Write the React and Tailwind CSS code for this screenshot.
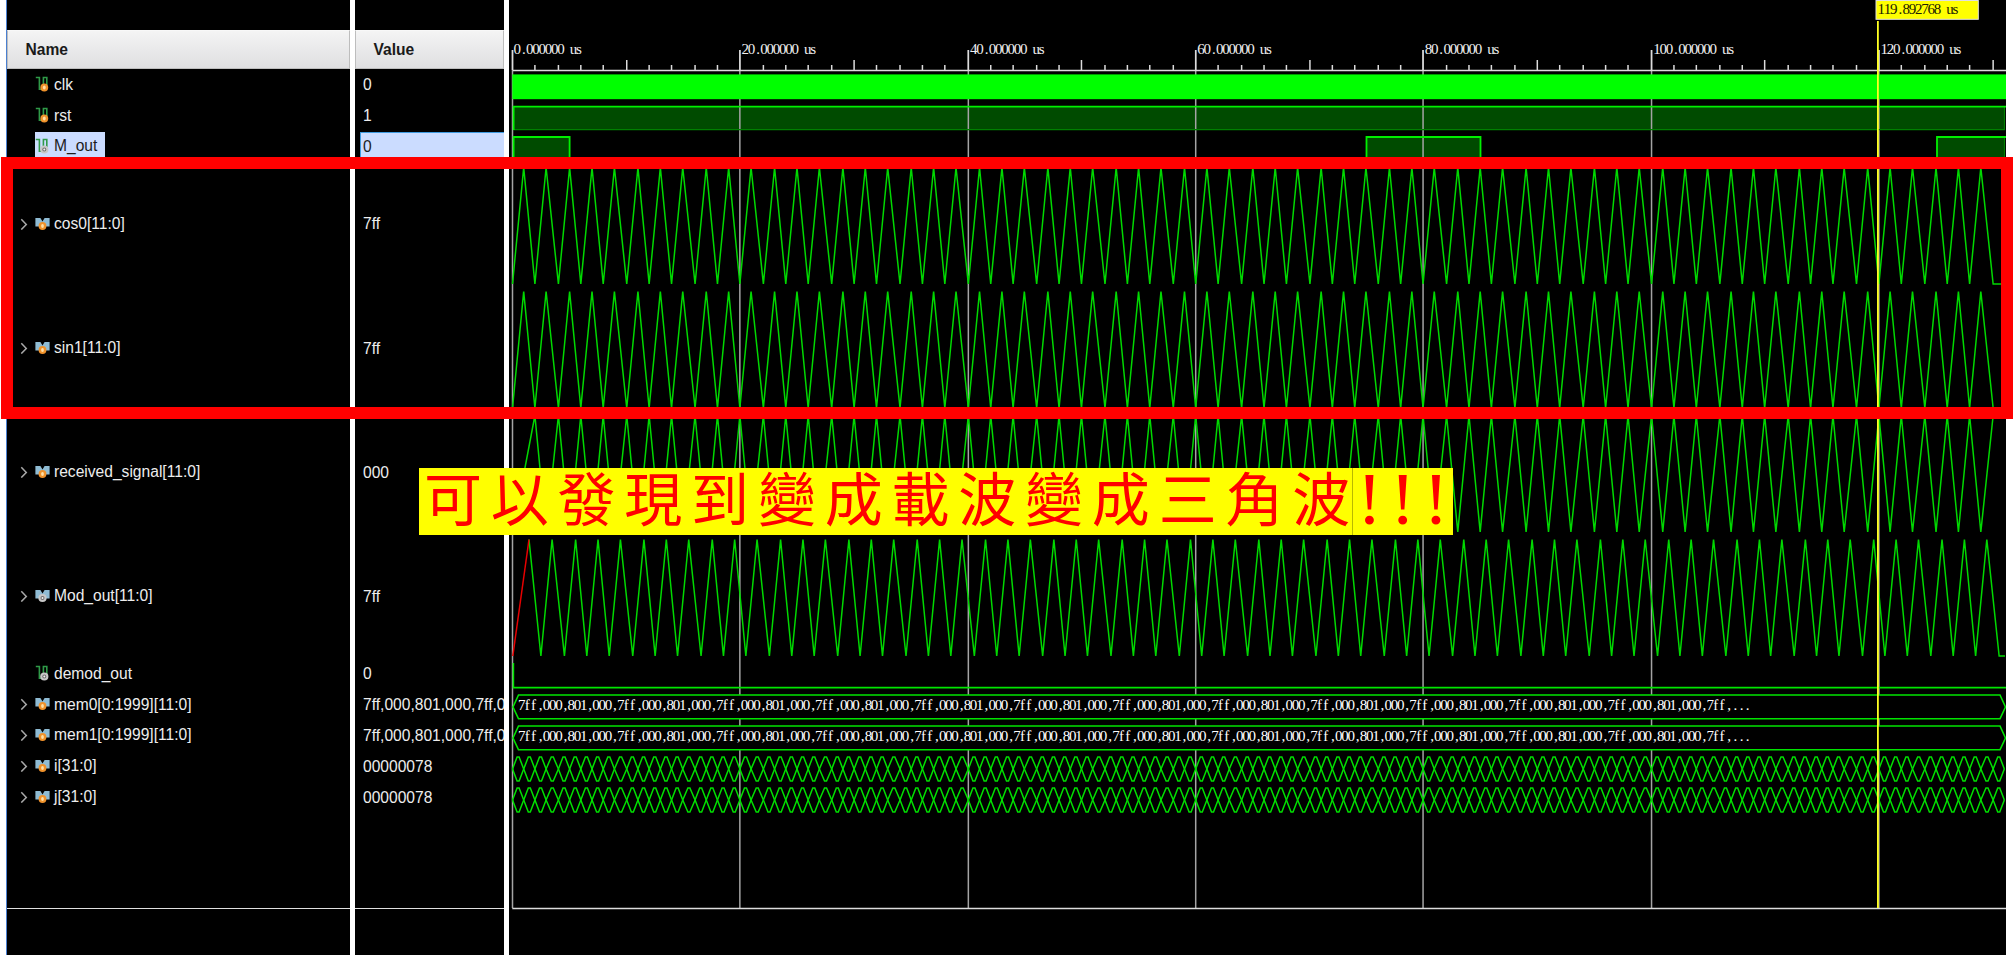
import React from "react";

const X0 = 512.8 - 509;
const UNIT = 11.386;
const SNAP = 1.12;
const tx = (t) => X0 - 0.3 + Math.round((t * UNIT) / SNAP) * SNAP;

const ROWS = [
  { name: "clk", value: "0", kind: "bit", tone: "orange" },
  { name: "rst", value: "1", kind: "bit", tone: "orange" },
  { name: "M_out", value: "0", kind: "bit", tone: "gray", selected: true },
  { name: "cos0[11:0]", value: "7ff", kind: "bus", tone: "orange", tall: true },
  { name: "sin1[11:0]", value: "7ff", kind: "bus", tone: "orange", tall: true },
  { name: "received_signal[11:0]", value: "000", kind: "bus", tone: "orange", tall: true },
  { name: "Mod_out[11:0]", value: "7ff", kind: "bus", tone: "gray", tall: true },
  { name: "demod_out", value: "0", kind: "bit", tone: "gray" },
  { name: "mem0[0:1999][11:0]", value: "7ff,000,801,000,7ff,00", kind: "bus", tone: "orange" },
  { name: "mem1[0:1999][11:0]", value: "7ff,000,801,000,7ff,00", kind: "bus", tone: "orange" },
  { name: "i[31:0]", value: "00000078", kind: "bus", tone: "orange" },
  { name: "j[31:0]", value: "00000078", kind: "bus", tone: "orange" },
];

function Badge({ cx, cy, tone }) {
  return tone === "orange" ? (
    <g>
      <ellipse cx={cx} cy={cy} rx="3.9" ry="4" fill="#f0922b" />
      <ellipse cx={cx} cy={cy} rx="1.4" ry="1.9" fill="#ffe0a8" />
    </g>
  ) : (
    <g>
      <circle cx={cx} cy={cy} r="4.1" fill="#c8c8c8" />
      <circle cx={cx} cy={cy} r="2" fill="#6f6f6f" />
      <circle cx={cx} cy={cy} r="1" fill="#f2f2f2" />
    </g>
  );
}

function SignalIcon({ kind, tone }) {
  return (
    <svg className="block shrink-0" width="15" height="16" viewBox="0 0 15 16">
      {kind === "bit" ? (
        <path d="M0.8 1.5H4.4V13.2H8.4V1.5H11.8V9" fill="none" stroke="#2f9a48" strokeWidth="1.6" />
      ) : (
        <path d="M0.4 2H5.4L7.5 5.5L9.6 2H14.6V10.5H11L7.5 13L4 10.5H0.4Z" fill="#8fbcd4" />
      )}
      <Badge cx={kind === "bit" ? 9.3 : 7.5} cy={kind === "bit" ? 11.5 : 10} tone={tone} />
    </svg>
  );
}

function Chevron({ hidden }) {
  return (
    <svg className={hidden ? "block shrink-0 invisible" : "block shrink-0"} width="8" height="12" viewBox="0 0 8 12">
      <path d="M1.3 1.2L6.3 6.4L1.3 11.6" fill="none" stroke="#a8a8a8" strokeWidth="1.5" />
    </svg>
  );
}

function NameColumn() {
  return (
    <div className="flex w-[343px] shrink-0 flex-col">
      <Header label="Name" />
      <div className="flex h-[840px] flex-col border-b border-[#e0e0e0]">
        {ROWS.map((r) => (
          <div
            key={r.name}
            className={(r.tall ? "h-[124.1px]" : "h-[30.9px]") + " flex shrink-0 items-center pl-[12.5px]"}
          >
            <Chevron hidden={r.kind === "bit"} />
            <div
              className={
                (r.selected ? "bg-[#cbdcff] text-[#1c1c1c]" : "text-[#ededed]") +
                " ml-[7px] flex h-[29px] items-center gap-[4.5px] pr-[8px]"
              }
            >
              <SignalIcon kind={r.kind} tone={r.tone} />
              <span className="whitespace-nowrap text-[15.6px] leading-none">{r.name}</span>
            </div>
          </div>
        ))}
      </div>
    </div>
  );
}

function ValueColumn() {
  return (
    <div className="flex w-[148.5px] shrink-0 flex-col overflow-hidden">
      <Header label="Value" />
      <div className="flex h-[840px] flex-col border-b border-[#e0e0e0]">
        {ROWS.map((r) => (
          <div
            key={r.name}
            className={(r.tall ? "h-[124.1px]" : "h-[30.9px]") + " flex shrink-0 items-center pl-[5px]"}
          >
            <div
              className={
                (r.selected
                  ? "border-l border-t border-[#3f9be0] bg-[#cbdcff] text-[#1c1c1c]"
                  : "border-l border-t border-transparent text-[#ededed]") +
                " flex h-[29px] w-full items-center overflow-hidden pl-[2px]"
              }
            >
              <span className="whitespace-nowrap text-[15.6px] leading-none">{r.value}</span>
            </div>
          </div>
        ))}
      </div>
    </div>
  );
}

function Header({ label }) {
  return (
    <div className="mt-[30px] flex h-[39px] shrink-0 items-center border border-[#bdbdbd] border-t-[#f8f8f8] bg-linear-to-b from-[#f4f4f4] to-[#dfdfe1] pl-[17.5px] text-[15.6px] font-bold text-[#1a1a1a]">
      {label}
    </div>
  );
}

function Cells({ x, y, step, size, fill, children }) {
  const nudge = (c) => (c === "," || c === "." ? 2.2 : c === "f" ? 0.6 : 0);
  const xs = Array.from(children, (c, i) => (x + i * step + nudge(c)).toFixed(2)).join(" ");
  return (
    <text x={xs} y={y} fontFamily="'Liberation Serif', serif" fontSize={size} fill={fill}>
      {children}
    </text>
  );
}

function zigzag(first, count, offset, startHigh, top, bottom) {
  const pts = [];
  for (let i = 0; i < count; i++) {
    const high = startHigh ? i % 2 === 0 : i % 2 === 1;
    pts.push(`${(tx(first + i) + offset).toFixed(2)},${high ? top : bottom}`);
  }
  return pts.join(" ");
}

function lens(top) {
  const mid = top + 12;
  const bottom = top + 24;
  const a = [];
  const b = [];
  for (let k = 0; k < 131; k++) {
    const l = tx(k);
    const c = (tx(k) + tx(k + 1)) / 2;
    a.push(`${l},${mid} ${c - 1},${k % 2 ? bottom : top} ${c + 1},${k % 2 ? bottom : top}`);
    b.push(`${l},${mid} ${c - 1},${k % 2 ? top : bottom} ${c + 1},${k % 2 ? top : bottom}`);
  }
  const end = `${tx(131)},${mid}`;
  return [a.join(" ") + " " + end, b.join(" ") + " " + end];
}

const MEM_TEXT = "7ff,000,801,000,".repeat(12) + "7ff,...";
const TICKS = Array.from({ length: 66 }, (_, i) => i * 2);
const MAJORS = [0, 20, 40, 60, 80, 100, 120];

function Waves() {
  return (
    <svg className="block shrink-0" width="1497" height="955" viewBox="0 0 1497 955">
      <g fill="#004b00">
        <rect x={X0} y="106" width="1492" height="24" />
        <rect x={X0} y="137" width="57" height="24" />
        <rect x="857.5" y="137" width="114" height="24" />
        <rect x="1428" y="137" width="68" height="24" />
      </g>
      <g stroke="#a4a4a4" strokeWidth="1.5">
        {MAJORS.map((t) => (
          <line key={t} x1={tx(t)} x2={tx(t)} y1="50" y2="908" />
        ))}
      </g>
      <g stroke="#dcdcdc" strokeWidth="1.5">
        {TICKS.map((t) => (
          <line key={t} x1={tx(t)} x2={tx(t)} y1={t % 20 === 0 ? 50 : t % 10 === 0 ? 60 : 65} y2="70" />
        ))}
        <line x1={X0} x2="1497" y1="70.5" y2="70.5" />
        <line x1={X0 - 0.5} x2="1497" y1="908.4" y2="908.4" />
      </g>
      {MAJORS.map((t) => (
        <Cells key={t} x={tx(t) + (t ? 1.6 : 1)} y={53.5} step={6.25} size={15} fill="#f0f0f0">
          {t + ".000000 us"}
        </Cells>
      ))}

      <rect x={X0 - 0.5} y="74.4" width="1493.7" height="24.8" fill="#00ff00" />

      <g fill="none">
        <path d="M1495.5 107V129.6H4" stroke="#008000" strokeWidth="1.2" />
        <g stroke="#00f000" strokeWidth="1.8">
          <path d="M4.6 130V106.6H1497" />
          <path d="M4.6 161V137H60.6V161" />
          <path d="M857.5 161V137H971.5V161" />
          <path d="M1428 161V137H1497" />
        </g>
        <path d="M1495.5 138V161" stroke="#008000" strokeWidth="1.2" />
      </g>

      <g fill="none" stroke="#00d800" strokeWidth="1.5">
        <polyline points={zigzag(0, 131, 0, false, 167.5, 284) + " 1496,284"} />
        <polyline points={zigzag(0, 131, 0, false, 291.5, 408) + " 1496,408"} />
        <polyline points={`${X0},532 ` + zigzag(2, 129, 0, true, 415.5, 532) + " 1496,415.5"} />
        <polyline points={"20,539.5 " + zigzag(2, 129, 6, false, 539.5, 656) + " 1496,656"} />
        <polyline points={`${X0},656 20,539.5`} stroke="#e80000" />
        <path d="M4.4 663V687.6H1497" stroke="#00e400" strokeWidth="1.6" />
      </g>

      {[695, 726].map((y) => (
        <g key={y}>
          <polygon
            points={`4,${y + 12} 9.5,${y} 1491,${y} 1496.5,${y + 12} 1491,${y + 23.8} 9.5,${y + 23.8}`}
            fill="#000"
            stroke="#00e400"
            strokeWidth="1.6"
          />
          <Cells x={9} y={y + 15} step={6.19} size={15} fill="#ffffff">
            {MEM_TEXT}
          </Cells>
        </g>
      ))}

      <g fill="none" stroke="#00e000" strokeWidth="1.5">
        {[757, 788].map((y) => lens(y).map((p, i) => <polyline key={y + i} points={p} />))}
      </g>

      <line x1="1368.9" x2="1368.9" y1="21" y2="908" stroke="#ffff20" strokeWidth="1.8" />
      <rect x="1367" y="0.5" width="102.3" height="18.8" fill="#ffff00" stroke="#e0e0e0" />
      <Cells x={1368.6} y={14} step={6.25} size={15} fill="#202000">
        119.892768 us
      </Cells>
    </svg>
  );
}

export default function App() {
  return (
    <div className="relative flex h-[955px] w-[2013px] overflow-hidden bg-white font-['Liberation_Sans',Arial,sans-serif]">
      <div className="ml-[6px] flex bg-black">
        <div className="w-px bg-[#4a7fd0]" />
        <NameColumn />
        <div className="w-[5px] bg-white" />
        <ValueColumn />
        <div className="w-[5px] bg-white" />
        <div className="flex pl-[0.5px]">
          <Waves />
        </div>
      </div>

      <div className="absolute left-[1px] top-[156.5px] h-[262px] w-[2011.5px] border-[12px] border-[#ff0000]" />

      <div className="absolute left-[419px] top-[468px] flex h-[67px] w-[1034px] bg-[#ffff00] text-[#ff0000]">
        <div className="flex h-full w-[934px] border-r border-[#b8b800] pl-[0.5px] font-['Noto_Sans_CJK_TC',sans-serif] text-[58px] leading-[56px]">
          {Array.from("可以發現到變成載波變成三角波").map((c, i) => (
            <span key={i} className="w-[66.8px] shrink-0 text-center">
              {c}
            </span>
          ))}
        </div>
        <div className="flex h-full items-start font-['Liberation_Serif',serif] text-[75px] leading-[61px]">
          {[0, 1, 2].map((i) => (
            <span key={i} className="w-[33.2px] text-center">
              !
            </span>
          ))}
        </div>
      </div>
    </div>
  );
}
